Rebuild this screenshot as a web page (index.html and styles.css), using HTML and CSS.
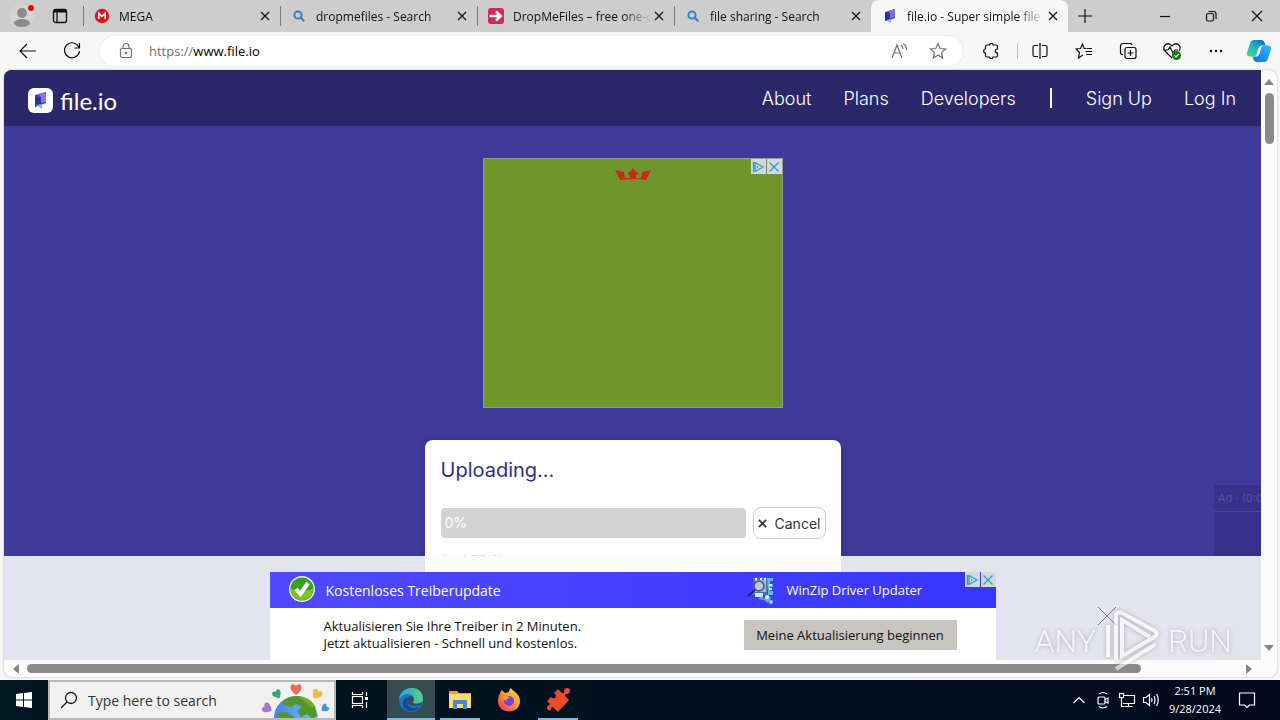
FILE: index.html
```html
<!DOCTYPE html>
<html lang="en">
<head>
    <meta charset="UTF-8">
    <meta name="viewport" content="width=device-width, initial-scale=1.0">
    <title>file.io - Super simple file sharing</title>
    <link rel="stylesheet" href="styles.css">
</head>
<body>

    <!-- Tab strip -->
    <div class="tab-strip">
        <button class="profile" aria-label="Profile">
            <svg width="28" height="28" viewBox="0 0 28 28"><circle cx="14" cy="14" r="12" fill="#d6d3d0"/><circle cx="14" cy="11" r="5" fill="#8d8a88"/><ellipse cx="14" cy="21" rx="8" ry="4" fill="#8d8a88"/><circle cx="23" cy="6" r="3" fill="#e00b1c"/></svg>
        </button>
        <button class="tab-actions" aria-label="Tab actions">
            <svg width="16" height="16" viewBox="0 0 16 16" fill="none" stroke="#111" stroke-width="1.3"><rect x="1.5" y="1.5" width="13" height="13" rx="2"/><path d="M2 3h12" stroke-width="3"/><path d="M5 3v11"/></svg>
        </button>
        <div class="tab">
            <svg class="favicon" viewBox="0 0 16 16"><circle cx="8" cy="8" r="7.2" fill="#d9121f"/><path d="M4.8 11V5.2L8 8.4l3.2-3.2V11" fill="none" stroke="#fff" stroke-width="1.7"/></svg>
            <span class="tab-title">MEGA</span>
            <button class="tab-close" aria-label="Close tab"><svg viewBox="0 0 10 10"><path d="M1 1l8 8M9 1L1 9"/></svg></button>
        </div>
        <div class="tab">
            <svg class="favicon" viewBox="0 0 16 16" fill="none" stroke="#3a7fba" stroke-width="2"><circle cx="7" cy="7" r="3.6"/><path d="M9.7 9.7l3.6 3.6"/></svg>
            <span class="tab-title">dropmefiles - Search</span>
            <button class="tab-close" aria-label="Close tab"><svg viewBox="0 0 10 10"><path d="M1 1l8 8M9 1L1 9"/></svg></button>
        </div>
        <div class="tab">
            <svg class="favicon" viewBox="0 0 16 16"><rect width="16" height="16" rx="3" fill="#d62463"/><path d="M1.5 8h11M8 3.5L12.8 8 8 12.5" fill="none" stroke="#fff" stroke-width="2.4"/></svg>
            <span class="tab-title">DropMeFiles – free one-c</span>
            <button class="tab-close" aria-label="Close tab"><svg viewBox="0 0 10 10"><path d="M1 1l8 8M9 1L1 9"/></svg></button>
        </div>
        <div class="tab">
            <svg class="favicon" viewBox="0 0 16 16" fill="none" stroke="#3a7fba" stroke-width="2"><circle cx="7" cy="7" r="3.6"/><path d="M9.7 9.7l3.6 3.6"/></svg>
            <span class="tab-title">file sharing - Search</span>
            <button class="tab-close" aria-label="Close tab"><svg viewBox="0 0 10 10"><path d="M1 1l8 8M9 1L1 9"/></svg></button>
        </div>
        <div class="tab active">
            <svg class="favicon" viewBox="0 0 16 16"><path d="M3 4l10-3v9l-7 3-3-1z" fill="#5a45cf"/><path d="M3 4l5 1v7l-5 1z" fill="#3b2a98"/><path d="M6 3l7-2v8l-5 1V5z" fill="#8368e6"/><path d="M4 12l5-1v4z" fill="#65c4e8"/></svg>
            <span class="tab-title">file.io - Super simple file</span>
            <button class="tab-close" aria-label="Close tab"><svg viewBox="0 0 10 10"><path d="M1 1l8 8M9 1L1 9"/></svg></button>
        </div>
        <button class="new-tab" aria-label="New tab"><svg width="14" height="14" viewBox="0 0 14 14"><path d="M7 0v14M0 7h14"/></svg></button>
        <div class="window-buttons">
            <button aria-label="Minimize"><svg width="12" height="12" viewBox="0 0 12 12"><path d="M1 6.5h10"/></svg></button>
            <button aria-label="Restore"><svg width="12" height="12" viewBox="0 0 12 12"><rect x="1.5" y="3.5" width="7" height="7.5" rx="1.5"/><path d="M3.5 1.5h5a2.5 2.5 0 0 1 2.5 2.5v5"/></svg></button>
            <button aria-label="Close"><svg width="12" height="12" viewBox="0 0 12 12"><path d="M1 1l10 10M11 1L1 11"/></svg></button>
        </div>
    </div>

    <!-- Toolbar -->
    <div class="toolbar">
        <button aria-label="Back"><svg width="20" height="20" viewBox="0 0 20 20"><path d="M18 10H2.500M9 3L2 10l7 7"/></svg></button>
        <button aria-label="Refresh"><svg width="20" height="20" viewBox="0 0 20 20"><path d="M17 6.500A7.500 7.500 0 1 0 17.500 10M17.500 2v5h-5"/></svg></button>
        <div class="address">
            <svg class="lock" width="16" height="18" viewBox="0 0 16 18"><rect x="2.500" y="6.500" width="11" height="9" rx="1.500"/><path d="M5 6.500V4.500a3 3 0 0 1 6 0v2"/><circle cx="8" cy="11" r=".6"/></svg>
            <label for="url">https://</label>
            <input id="url" type="text" value="www.file.io">
            <button aria-label="Read aloud"><svg width="18" height="18" viewBox="0 0 18 18"><path d="M2 16L7 3l5 13M4 11h6M11 3q2 1.500 2 4M13 1.500q3.500 2 3.500 6.500"/></svg></button>
            <button aria-label="Add to favorites"><svg width="18" height="18" viewBox="0 0 18 18"><path d="M9 1.500l2.200 5 5.300.5-4 3.600 1.200 5.400L9 13.200 4.300 16l1.200-5.400-4-3.600 5.300-.5z"/></svg></button>
        </div>
        <button aria-label="Extensions"><svg width="18" height="18" viewBox="0 0 18 18"><path d="M5 3h2.500c0-2.200 3.500-2.200 3.500 0h3a1.500 1.500 0 0 1 1.500 1.500V7c-3 0-3 4 0 4v2.500A1.500 1.500 0 0 1 14 15h-3c0 2.200-3.500 2.200-3.500 0H5a1.500 1.500 0 0 1-1.500-1.500V11c-2.400 0-2.400-4 0-4V4.500A1.500 1.500 0 0 1 5 3z"/></svg></button>
        <span class="toolbar-sep"></span>
        <button aria-label="Split screen"><svg width="18" height="18" viewBox="0 0 18 18"><path d="M9 1v16M7 3.500H3.500a1.500 1.500 0 0 0-1.500 1.500v8a1.500 1.500 0 0 0 1.500 1.500H7M11 3.500h3.500A1.500 1.500 0 0 1 16 5v8a1.500 1.500 0 0 1-1.500 1.500H11"/></svg></button>
        <button aria-label="Favorites"><svg width="18" height="18" viewBox="0 0 18 18"><path d="M11 6.500H9.200L7.500 2 5.500 6.500 1 7l3.500 3.500L3.500 16 8 13M11.500 6.500H17M10.500 9.500H17M11 12.500h6"/></svg></button>
        <button aria-label="Collections"><svg width="18" height="18" viewBox="0 0 18 18"><path d="M4 12.500A2 2 0 0 1 1.500 11V4A2.500 2.500 0 0 1 4 1.500h6.500A2 2 0 0 1 13 3"/><rect x="6" y="5.500" width="11" height="11" rx="2"/><path d="M11.500 8v6M8.500 11h6"/></svg></button>
        <button aria-label="Browser essentials"><svg width="20" height="20" viewBox="0 0 20 20"><path d="M10 17L3 10C-1 5 6 0 10 5c4-5 11 0 7 5M1 9h5l2-3 3 6 2-3h3"/><circle cx="14.500" cy="14.500" r="4.500" fill="#107c10" stroke="none"/><path d="M12.500 14.500l1.500 1.500 2.800-3" stroke="#fff"/></svg></button>
        <button aria-label="Settings and more"><svg width="16" height="16" viewBox="0 0 16 16" fill="#111"><circle cx="3" cy="8" r=".6"/><circle cx="8" cy="8" r=".6"/><circle cx="13" cy="8" r=".6"/></svg></button>
        <button class="copilot" aria-label="Copilot">
            <svg width="26" height="24" viewBox="0 0 26 24" class="filled">
                <defs>
                    <linearGradient id="copLeft" x1="0" y1="1" x2="1" y2="0"><stop offset="0" stop-color="#52d67b"/><stop offset=".5" stop-color="#1db7c9"/><stop offset="1" stop-color="#0a55c5"/></linearGradient>
                    <linearGradient id="copRight" x1="0" y1="1" x2="1" y2="0"><stop offset="0" stop-color="#146ce8"/><stop offset="1" stop-color="#2cbdfa"/></linearGradient>
                </defs>
                <path d="M8 1h7q3 0 4 4l.5 1.500h-4q-2 0-3 3l-2 6q-1 2-3 2H4q-4 0-3-4l3-9q1-3.500 4-3.500z" fill="url(#copLeft)"/>
                <path d="M18 6.500h4q4 0 3 4l-3 9q-1 3.500-4 3.500h-7q-3 0-4-4l-.5-1.500h4q2 0 3-3l2-6q.8-2 2.500-2z" fill="url(#copRight)"/>
            </svg>
        </button>
    </div>

    <!-- Browser viewport -->
    <div class="viewport">
        <div class="page">
            <header class="site-header">
                <a class="logo" href="#">
                    <svg width="25" height="25" viewBox="0 0 25 25"><rect width="25" height="25" rx="6" fill="#fff"/><path d="M7 7l11-3v11l-5 2-6 2z" fill="#4b3bb5"/><path d="M10 6l8-2v10l-5 1V9z" fill="#8d70ee"/><path d="M7 8l6 2v7l-6 1z" fill="#33328e"/><path d="M8 17l6-1v5z" fill="#5cc3d5"/></svg>
                    <span>file.io</span>
                </a>
                <nav class="site-nav">
                    <a href="#">About</a>
                    <a href="#">Plans</a>
                    <a href="#">Developers</a>
                    <span class="nav-divider"></span>
                    <a href="#">Sign Up</a>
                    <a href="#">Log In</a>
                </nav>
            </header>

            <main>
                <div class="square-ad">
                    <svg class="crown" width="36" height="14" viewBox="0 0 36 14"><path d="M0 2l9 2 1 6h5V7l-3-1 2-2 2-1 2-3 2 3 2 1 2 2-3 1v3h5l1-6 9-2-5 10q-13-2-26 0z" fill="#c9281c"/></svg>
                    <div class="ad-choices">
                        <button aria-label="About this ad"><svg viewBox="0 0 12 12"><path d="M1.500 1v10M3 1.500L11 6l-8 4.500zM5.500 5v2"/></svg></button>
                        <button aria-label="Close ad"><svg viewBox="0 0 12 12"><path d="M1.500 1.500l9 9M10.500 1.500l-9 9"/></svg></button>
                    </div>
                </div>

                <section class="upload-card">
                    <h1>Uploading...</h1>
                    <div class="upload-row">
                        <div class="progress" role="progressbar" aria-label="Upload" aria-valuenow="0">0%</div>
                        <button class="cancel"><svg width="9" height="9" viewBox="0 0 10 10"><path d="M1 1l8 8M9 1L1 9"/></svg>Cancel</button>
                    </div>
                    <p class="file-size">0 of 75 files</p>
                </section>
            </main>

            <div class="video-ad"><p>Ad · (0:0</p></div>

            <div class="bottom-banner">
                <div class="banner-ad">
                    <div class="banner-head">
                        <div class="banner-col">
                            <svg width="28" height="28" viewBox="0 0 28 28"><circle cx="14" cy="13" r="13" fill="#e8f3e0"/><circle cx="14" cy="13" r="11.500" fill="#36a01f"/><path d="M3 13a11 11 0 0 0 22 0q-11 3-22 0z" fill="#80c51f"/><path d="M8 13l4.500 5L20 7" fill="none" stroke="#fff" stroke-width="4"/></svg>
                            <strong>Kostenloses Treiberupdate</strong>
                        </div>
                        <div class="banner-col product">
                            <svg width="28" height="28" viewBox="0 0 28 28"><path d="M6 1h14v18H6z" fill="#3d73b8"/><path d="M8 4h11v12H8z" fill="#a9b9d5"/><path d="M20 2h6v3h-3v3h3v3h-3v4h3v4h-5z" fill="#64b5ee"/><circle cx="12" cy="10" r="5" fill="#bdc6e5" stroke="#4c5168" stroke-width="1.500"/><path d="M8 14l-7 6" stroke="#222d55" stroke-width="2"/><path d="M8 17h8v4H8z" fill="#dae8fa"/><path d="M11 23l4-3 2 3 4-4 3 3-3 5-4-3z" fill="#48b4f2"/><circle cx="20" cy="21" r="2" fill="#fff"/><circle cx="24" cy="26" r="2" fill="#8ad1ff"/><path d="M8 3h2M13 3h2M17 3h2M22 9h3M22 13h3" stroke="#e2f3ff" stroke-width="2"/></svg>
                            <span>WinZip Driver Updater</span>
                        </div>
                    </div>
                    <div class="banner-body">
                        <p>Aktualisieren Sie Ihre Treiber in 2 Minuten.<br>Jetzt aktualisieren - Schnell und kostenlos.</p>
                        <button class="banner-cta">Meine Aktualisierung beginnen</button>
                    </div>
                    <div class="ad-choices">
                        <button aria-label="About this ad"><svg viewBox="0 0 12 12"><path d="M1.500 1v10M3 1.500L11 6l-8 4.500zM5.500 5v2"/></svg></button>
                        <button aria-label="Close ad"><svg viewBox="0 0 12 12"><path d="M1.500 1.500l9 9M10.500 1.500l-9 9"/></svg></button>
                    </div>
                </div>
                <button class="banner-close" aria-label="Close"><svg width="20" height="20" viewBox="0 0 20 20"><path d="M1 1l18 18M19 1L1 19"/></svg></button>
            </div>
        </div>

        <div class="scroll-y">
            <svg width="10" height="6" viewBox="0 0 10 6"><path d="M0 6l5-6 5 6z"/></svg>
            <div class="track"><div class="thumb"></div></div>
            <svg width="10" height="6" viewBox="0 0 10 6"><path d="M0 0l5 6 5-6z"/></svg>
        </div>
        <div class="scroll-x">
            <svg width="6" height="10" viewBox="0 0 6 10"><path d="M6 0L0 5l6 5z"/></svg>
            <div class="track"><div class="thumb"></div></div>
            <svg width="6" height="10" viewBox="0 0 6 10"><path d="M0 0l6 5-6 5z"/></svg>
        </div>
    </div>

    <div class="watermark">
        <span>ANY</span>
        <svg width="56" height="62" viewBox="0 0 56 62" fill="none" stroke="#fff" stroke-width="4"><path d="M4 15v32"/><path d="M46 27L18 10v36l34-20q2-3-1-5L18 3q-6-2-6 3v44M12 59l40-25"/></svg>
        <span>RUN</span>
    </div>

    <!-- Taskbar -->
    <div class="taskbar">
        <button class="start" aria-label="Start"><svg width="16" height="16" viewBox="0 0 16 16"><path d="M0 2l7-1v6.500H0zM8 .9L16 0v7.500H8zM0 8.500h7V15l-7-1zM8 8.500h8V16l-8-1z" fill="#fff"/></svg></button>
        <div class="search">
            <svg width="18" height="18" viewBox="0 0 18 18" fill="none" stroke="#111" stroke-width="1.300"><circle cx="11" cy="7" r="5.500"/><path d="M7 11l-6 6"/></svg>
            <input type="text" placeholder="Type here to search" aria-label="Type here to search">
            <svg class="globe" width="72" height="36" viewBox="0 0 72 36">
                <defs>
                    <linearGradient id="sea" x1="0" x2="1"><stop offset="0" stop-color="#4b7fe6"/><stop offset="1" stop-color="#6ec5f6"/></linearGradient>
                    <path id="heart" d="M0 6C-10-1-4-8 0-3 4-8 10-1 0 6z"/>
                </defs>
                <circle cx="36" cy="36" r="22" fill="url(#sea)"/>
                <path d="M22 20q6-6 14-6 13 0 19 11l2 9-5 3-5-5-6 3-4-6 5-4-6-3-5 3-7-2zM17 31l9-1 8 5-2 4H18z" fill="#51972b"/>
                <path d="M38 14q13 1 18 12l-6-1-5-5z" fill="#75aa27"/>
                <use href="#heart" transform="translate(36 7)" fill="#ee6950"/>
                <use href="#heart" transform="translate(17 12) rotate(-30) scale(.8)" fill="#2fa873"/>
                <use href="#heart" transform="translate(57 12) rotate(30) scale(.9)" fill="#f5b92d"/>
                <use href="#heart" transform="translate(7 26) rotate(-60) scale(.9)" fill="#a673d6"/>
                <use href="#heart" transform="translate(65 26) rotate(50) scale(.7)" fill="#3a96dd"/>
            </svg>
        </div>
        <button class="task-view" aria-label="Task View"><svg width="18" height="18" viewBox="0 0 18 18" fill="none" stroke="#fff" stroke-width="1.200"><path d="M1.500 1v2.500h10V1M1.500 17v-2.500h10V17M15.500 1v4M15.500 11v6"/><rect x="1.500" y="5.500" width="10" height="7"/><path d="M14 7.500h3" stroke-width="3"/></svg></button>
        <button class="app current" aria-label="Microsoft Edge">
            <svg width="24" height="24" viewBox="0 0 24 24">
                <defs><linearGradient id="edgeTop" x1="0" x2="1"><stop offset="0" stop-color="#25a2e0"/><stop offset="1" stop-color="#55d283"/></linearGradient></defs>
                <circle cx="12" cy="12" r="12" fill="#1b75c9"/>
                <path d="M0 12C1-4 24-4 24 11c0 6-8 6-10 4-1-1 1-1 1-4 0-6-11-7-15 1z" fill="url(#edgeTop)"/>
                <path d="M9 10c-4 6 2 12 11 9-5 7-14 5-16-2C3 11 7 9 9 10z" fill="#114c93"/>
                <path d="M14 15c-1-1 1-2 1-4-1-3-5-3-6-1-3 5 2 10 13 7l1-3q-5 3-9 1z" fill="#354b52"/>
            </svg>
        </button>
        <button class="app open" aria-label="File Explorer"><svg width="22" height="20" viewBox="0 0 22 20"><path d="M0 1h8l2 2h12v15H0z" fill="#e7a92d"/><path d="M0 4h22v14H0z" fill="#ffda70"/><path d="M4 19v-8q0-1 1-1h12q1 0 1 1v8h-4v-5H8v5z" fill="#3f8fd1"/></svg></button>
        <button class="app" aria-label="Firefox">
            <svg width="24" height="24" viewBox="0 0 24 24">
                <defs><linearGradient id="fox" x1="1" y1="0" x2="0" y2="1"><stop offset="0" stop-color="#ffe63c"/><stop offset=".5" stop-color="#ff9425"/><stop offset="1" stop-color="#f42468"/></linearGradient></defs>
                <path d="M3 5l2-3 3 3 4-1c0-2 1-3 2-4 1 3 9 5 9 13 0 14-22 14-22 0 0-3 1-6 2-8z" fill="url(#fox)"/>
                <circle cx="12" cy="13" r="5" fill="#7146dc"/>
                <path d="M5 8q5-1 8 2-4 0-4 3-2-1-4-5z" fill="#ffa62d"/>
            </svg>
        </button>
        <button class="app open" aria-label="Puzzle"><svg width="24" height="24" viewBox="0 0 24 24"><path d="M1 13l4-4q2 2 4 1 2-2 0-4L8 5l4-4 3 3q2 2 3 1 0-5 3-5t3 3-4 3q-2 1 0 3l3 3-11 12-5-5q-2 0-2 2-1 2-3 1-2-2 0-4l2-2z" fill="#ec4c2b"/></svg></button>
        <div class="tray">
            <button aria-label="Show hidden icons"><svg width="14" height="14" viewBox="0 0 14 14"><path d="M1.500 10L7 4.500l5.500 5.500"/></svg></button>
            <button aria-label="Meet Now"><svg width="16" height="18" viewBox="0 0 16 18"><rect x="3" y="6" width="7" height="7" rx="1"/><path d="M10 8.500l3-1.500v5l-3-1.500M4 3q4-3 8 0M4 15.500q4 3 8 0"/></svg></button>
            <button aria-label="Network"><svg width="18" height="16" viewBox="0 0 18 16"><path d="M6 3.500h10.500v8H5M10.500 11.500V14M6.500 14.500h8M3.500 6v8.500H6"/><rect x="1.500" y="1.500" width="4" height="4"/></svg></button>
            <button aria-label="Volume"><svg width="18" height="16" viewBox="0 0 18 16"><path d="M1.500 5.500H4L7.500 2.500v11L4 10.500H1.500zM9.500 6q1 2 0 4M12 4q2 4 0 8M14.500 2q3.500 6 0 12"/></svg></button>
            <div class="clock">2:51 PM<br>9/28/2024</div>
            <button class="notifications" aria-label="Notifications"><svg width="18" height="18" viewBox="0 0 18 18"><path d="M1.500 2h15v12h-5L9 16.500 6.500 14h-5z"/></svg></button>
        </div>
    </div>

</body>
</html>
```
FILE: styles.css
```css
* {
    box-sizing: border-box;
}

body {
    display: flex;
    flex-direction: column;
    height: 100vh;
    margin: 0;
    overflow: hidden;
    background: #f7f7f7;
    color: #111;
    font-family: "Open Sans", "Noto Sans", sans-serif;
    font-size: 12px;
}

button {
    display: flex;
    flex: none;
    align-items: center;
    justify-content: center;
    padding: 0;
    border: 0;
    background: none;
    color: inherit;
    font: inherit;
}

input {
    min-width: 0;
    padding: 0;
    border: 0;
    outline: 0;
    background: none;
    color: inherit;
    font: inherit;
}

a {
    color: inherit;
    text-decoration: none;
}

h1,
p {
    margin: 0;
}

/* Tab strip */
.tab-strip {
    display: flex;
    flex: none;
    height: 32px;
    background: #cdcdcd;
}

.profile {
    width: 44px;
}

.tab-actions {
    width: 32px;
    margin-right: 7px;
}

.tab {
    display: flex;
    flex: 0 1 197px;
    align-items: center;
    min-width: 0;
    padding: 0 7px 0 11px;
    background: linear-gradient(#777, #777) left center / 1px 20px no-repeat;
}

.tab.active {
    border-radius: 8px 8px 0 0;
    background: #f7f7f7;
}

.favicon {
    flex: none;
    width: 16px;
    height: 16px;
}

.tab-title {
    flex: 1;
    margin-left: 9px;
    overflow: hidden;
    white-space: nowrap;
    mask-image: linear-gradient(to right, #000 80%, transparent);
}

.tab-close {
    width: 16px;
    height: 16px;
}

.tab-close svg {
    width: 10px;
    height: 10px;
}

.tab-close path,
.new-tab path,
.window-buttons svg {
    fill: none;
    stroke: #111;
    stroke-width: 1.2;
}

.new-tab {
    width: 34px;
}

.window-buttons {
    display: flex;
    margin-left: auto;
}

.window-buttons button {
    width: 46px;
}

/* Toolbar */
.toolbar {
    display: flex;
    flex: none;
    align-items: center;
    height: 38px;
    padding-left: 6px;
}

.toolbar > button {
    width: 44px;
    height: 32px;
}

.toolbar > .copilot {
    width: 42px;
}

.toolbar svg {
    stroke: #111;
    stroke-width: 1.2;
}

.toolbar svg:not([fill]):not(.filled) {
    fill: none;
}

.toolbar svg.filled {
    stroke: none;
}

.toolbar-sep {
    width: 1px;
    height: 16px;
    margin-left: 4px;
    background: #c4c4c4;
}

.address {
    display: flex;
    flex: 1;
    align-items: center;
    height: 30px;
    margin: 0 6px;
    padding: 0 6px 0 18px;
    border-radius: 15px;
    background: #fff;
    box-shadow: 0 0 2px #ddd;
    font-size: 13px;
}

.toolbar .address svg {
    stroke: #707070;
}

.address label {
    margin-left: 15px;
    color: #707070;
}

.address input {
    flex: 1;
    color: #000;
}

.address button {
    width: 39px;
    height: 28px;
}

/* Viewport with its scrollbars */
.viewport {
    display: grid;
    flex: 1;
    grid-template-columns: 1fr 16px;
    grid-template-rows: 1fr 17px;
    min-height: 0;
    margin: 0 3px 3px 4px;
    overflow: hidden;
    border-radius: 8px;
    background: #fcfcfc;
    box-shadow: 0 0 2px #aaa;
}

.page {
    position: relative;
    min-width: 0;
    overflow: hidden;
    background: #3e3a99;
    font-family: "Inter", sans-serif;
}

.scroll-y,
.scroll-x {
    display: flex;
    align-items: center;
    fill: #858585;
}

.scroll-y {
    flex-direction: column;
    padding: 9px 0;
}

.scroll-x {
    padding: 0 9px;
}

.track {
    flex: 1;
}

.scroll-y .track {
    padding: 8px 0;
}

.scroll-x .track {
    padding: 0 8px;
}

.thumb {
    border-radius: 5px;
    background: #8a8a8a;
}

.scroll-y .thumb {
    width: 9px;
    height: 51px;
}

.scroll-x .thumb {
    width: 92%;
    height: 9px;
}

/* file.io page */
.site-header {
    display: flex;
    align-items: center;
    justify-content: space-between;
    height: 56px;
    padding: 0 25px 0 24px;
    background: #2a276b;
    color: #fff;
}

.logo {
    display: flex;
    align-items: center;
    gap: 7px;
    margin-top: 4px;
    font-family: "Lato", sans-serif;
    font-size: 24px;
}

.site-nav {
    display: flex;
    align-items: center;
    gap: 32px;
    font-size: 18px;
    font-weight: 300;
}

.nav-divider {
    width: 2px;
    height: 20px;
    margin: 0 2px;
    background: #fff;
}

main {
    display: flex;
    flex-direction: column;
    align-items: center;
    gap: 32px;
    padding-top: 32px;
}

.square-ad {
    position: relative;
    display: flex;
    justify-content: center;
    width: 300px;
    height: 250px;
    padding-top: 9px;
    border: 1px solid #8f9d8a;
    background: #70962b;
}

.ad-choices {
    position: absolute;
    top: 0;
    right: 0;
    display: flex;
    gap: 1px;
}

.ad-choices button {
    width: 15px;
    height: 15px;
    background: #d5d8dc;
}

.ad-choices svg {
    width: 12px;
    height: 12px;
    fill: none;
    stroke: #22a5cc;
    stroke-width: 1.3;
}

.upload-card {
    width: 416px;
    height: 240px;
    padding: 16px 15px 16px 16px;
    border-radius: 8px;
    background: #fff;
    box-shadow: 0 2px 8px rgba(0, 0, 0, 0.2);
}

.upload-card h1 {
    color: #342e8c;
    font-size: 20px;
    font-weight: 400;
    line-height: 28px;
}

.upload-row {
    display: flex;
    align-items: center;
    gap: 7px;
    margin-top: 23px;
}

.progress {
    flex: 1;
    padding: 0 4px;
    border-radius: 4px;
    background: #d3d3d3;
    color: #fff;
    font-size: 14px;
    line-height: 30px;
}

.cancel {
    gap: 8px;
    width: 73px;
    height: 32px;
    border: 1px solid #ccc;
    border-radius: 8px;
    color: #333;
    font-size: 14px;
}

.cancel path {
    stroke: #333;
    stroke-width: 2;
}

.file-size {
    margin-top: 13px;
    color: #ddd;
    font-size: 14px;
}

.video-ad {
    position: absolute;
    top: 415px;
    right: 0;
    width: 47px;
    height: 175px;
    overflow: hidden;
    background: #363289;
}

.video-ad p {
    padding-left: 4px;
    border-bottom: 1px solid #48449a;
    color: #55519f;
    font-size: 11px;
    line-height: 26px;
    white-space: nowrap;
}

/* Banner pinned to the bottom of the page */
.bottom-banner {
    position: absolute;
    right: 0;
    bottom: 0;
    left: 0;
    display: flex;
    justify-content: center;
    padding-top: 16px;
    background: rgba(252, 252, 252, 0.88);
    color: #111;
    font-family: "Open Sans", "Noto Sans", sans-serif;
}

.banner-ad {
    position: relative;
    width: 726px;
    background: #fff;
}

.banner-head,
.banner-body {
    display: grid;
    grid-template-columns: 1fr 252px;
    align-items: center;
}

.banner-head {
    height: 36px;
    background: linear-gradient(to right, #5049ff, #3636ff);
    color: #fff;
    font-size: 13px;
}

.banner-col {
    display: flex;
    align-items: center;
    gap: 10px;
    padding-left: 18px;
}

.banner-col.product {
    gap: 12px;
    padding-left: 3px;
}

.banner-col strong {
    font-size: 14px;
    font-weight: 400;
}

.banner-body {
    height: 52px;
    padding: 2px 0 0 54px;
    font-size: 13px;
    line-height: 17px;
}

.banner-cta {
    width: 213px;
    height: 30px;
    background: #c9c5c1;
}

.banner-close {
    position: absolute;
    right: 144px;
    bottom: 34px;
}

.banner-close path {
    stroke: #777;
}

.watermark {
    position: absolute;
    right: 48px;
    bottom: 48px;
    display: flex;
    align-items: center;
    gap: 8px;
    color: #fff;
    font-family: "Roboto", sans-serif;
    font-size: 32px;
    font-weight: 300;
    opacity: 0.6;
    filter: drop-shadow(0 0 2px #888);
    pointer-events: none;
}

/* Taskbar */
.taskbar {
    display: flex;
    flex: none;
    height: 40px;
    background: linear-gradient(to right, #001620, #010a1c);
    color: #fff;
}

.start {
    width: 48px;
}

.search {
    display: flex;
    align-items: center;
    width: 288px;
    padding: 0 2px 0 10px;
    border: 2px solid #b8b8b8;
    background: #f1f1f1;
    color: #222;
    font-size: 14px;
}

.search input {
    flex: 1;
    margin-left: 10px;
}

.search input::placeholder {
    color: #333;
    opacity: 1;
}

.search svg {
    flex: none;
}

.task-view {
    width: 48px;
    margin-right: 3px;
}

.app {
    width: 40px;
    margin: 0 5px 0 4px;
    border: solid transparent;
    border-width: 2px 0;
}

.app.current {
    width: 48px;
    margin: 0 1px 0 0;
    background: #354b52;
}

.app.current,
.app.open {
    border-bottom-color: #76b9ed;
}

.tray {
    display: flex;
    margin-left: auto;
}

.tray button {
    width: 24px;
}

.tray svg {
    fill: none;
    stroke: #fff;
    stroke-width: 1.2;
}

.clock {
    align-self: center;
    width: 64px;
    font-size: 11px;
    line-height: 18px;
    text-align: center;
}

.tray .notifications {
    width: 40px;
    margin-right: 13px;
}
```
